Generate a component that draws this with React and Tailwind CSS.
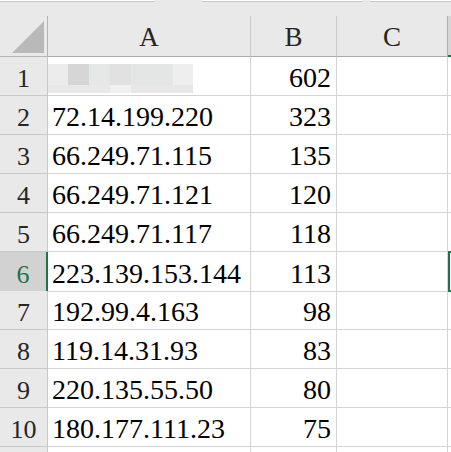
const rows = [
  { n: 1, a: null, b: '602' },
  { n: 2, a: '72.14.199.220', b: '323' },
  { n: 3, a: '66.249.71.115', b: '135' },
  { n: 4, a: '66.249.71.121', b: '120' },
  { n: 5, a: '66.249.71.117', b: '118' },
  { n: 6, a: '223.139.153.144', b: '113' },
  { n: 7, a: '192.99.4.163', b: '98' },
  { n: 8, a: '119.14.31.93', b: '83' },
  { n: 9, a: '220.135.55.50', b: '80' },
  { n: 10, a: '180.177.111.23', b: '75' },
];

// blurred-out value in A1
function Mosaic() {
  return (
    <div className="flex h-[29px] w-[145px] flex-col">
      <div className="flex h-[21px]">
        <div className="w-[20px] bg-[#ececec]" />
        <div className="w-[21px] bg-[#d6d6d6]" />
        <div className="w-[21px] bg-[#e6e8e8]" />
        <div className="w-[21px] bg-[#e1e1e1]" />
        <div className="w-[42px] bg-[#e4e6e6]" />
        <div className="w-[20px] bg-[#eeeeee]" />
      </div>
      <div className="flex flex-1">
        <div className="w-[62px] bg-[#e8e8e8]" />
        <div className="w-[21px] bg-[#f0f0f0]" />
        <div className="flex-1 bg-[#e7e7e7]" />
      </div>
    </div>
  );
}

function Row({ row }) {
  const selected = row.n === 6;
  return (
    <div className="grid h-[39px] grid-cols-[48px_203px_86px_111px_3px]">
      <div
        className={`flex items-end justify-center border-b border-r pb-[3px] text-[26px] leading-[26px] ${
          selected
            ? 'border-b-[#c4c4c4] border-r-2 border-r-[#217346] bg-[#d2d2d2] text-[#217346]'
            : 'border-[#c8c8c8] bg-[#e9e9e9] text-[#262626]'
        }`}
      >
        {row.n}
      </div>
      <div className="flex items-end border-b border-r border-[#d4d4d4] pb-[3px] pl-[4px] text-[28px] leading-[28px] text-black">
        {row.a === null ? (
          <div className="mb-[-1px] ml-[-4px]">
            <Mosaic />
          </div>
        ) : (
          row.a
        )}
      </div>
      <div className="flex items-end justify-end border-b border-r border-[#d4d4d4] pb-[3px] pr-[5px] text-[28px] leading-[28px] text-black">
        {row.b}
      </div>
      <div className="border-b border-r border-[#d4d4d4]" />
      <div
        className={
          selected
            ? 'mt-[-1px] h-[41px] border-y-2 border-l-2 border-[#217346]'
            : 'border-b border-[#d4d4d4]'
        }
      />
    </div>
  );
}

export default function App() {
  return (
    <div className="h-[452px] w-[451px] overflow-hidden bg-white font-['Liberation_Serif','Tinos','Times_New_Roman','DejaVu_Serif',serif]">
      <div className="flex h-[16px] items-start bg-[#e9e9e9]">
        <div className="h-[2px] w-[155px] border-b border-[#c6c6c6] bg-white" />
        <div className="w-[47px]" />
        <div className="h-[2px] w-[161px] border-b border-[#c6c6c6] bg-white" />
        <div className="w-[7px]" />
        <div className="h-[2px] flex-1 border-b border-[#c6c6c6] bg-white" />
      </div>
      <div className="grid h-[41px] grid-cols-[48px_203px_86px_111px_3px] bg-[#e9e9e9] text-[27px] leading-[27px] text-[#262626]">
        <div className="relative border-b border-r border-[#b4b4b4]">
          <svg className="absolute left-[12px] top-[5px]" width="32" height="32" viewBox="0 0 32 32">
            <polygon points="0,32 32,0 32,32" fill="#b9b9b9" />
          </svg>
        </div>
        <div className="flex items-end justify-center border-b border-r border-b-[#ababab] border-r-[#cacaca] pb-[5px]">A</div>
        <div className="flex items-end justify-center border-b border-r border-b-[#ababab] border-r-[#cacaca] pb-[5px]">B</div>
        <div className="flex items-end justify-center border-b border-r border-b-[#ababab] border-r-[#b0b0b0] pb-[5px]">C</div>
        <div className="border-b-2 border-[#217346] bg-[#d6d6d6]" />
      </div>
      {rows.map((row) => (
        <Row key={row.n} row={row} />
      ))}
      <div className="grid h-[10px] grid-cols-[48px_203px_86px_111px_3px]">
        <div className="border-r border-[#c8c8c8] bg-[#e9e9e9]" />
        <div className="border-r border-[#d4d4d4]" />
        <div className="border-r border-[#d4d4d4]" />
        <div className="border-r border-[#d4d4d4]" />
        <div />
      </div>
    </div>
  );
}
